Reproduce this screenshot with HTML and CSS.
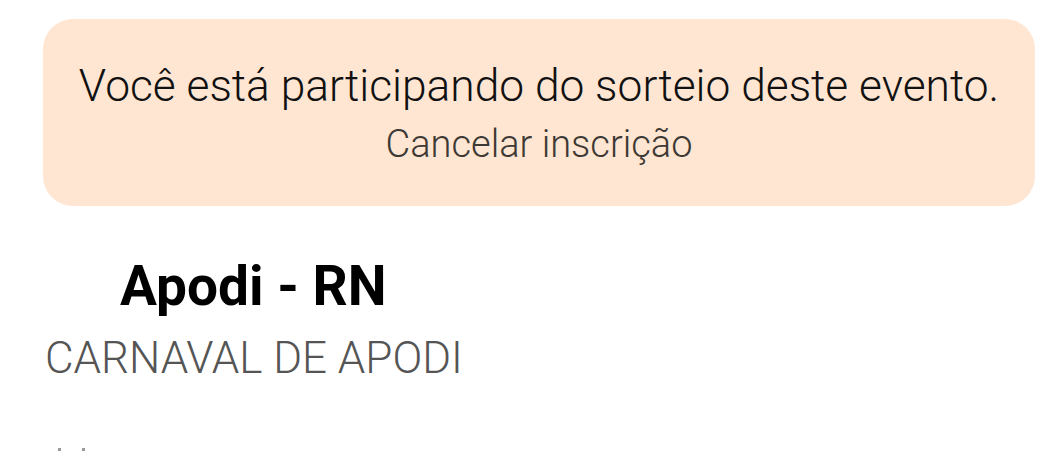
FILE: index.html
```html
<!DOCTYPE html>
<html>
<head>
    <meta name="viewport" content="width=device-width, initial-scale=1.0">
    <title>Sorteio - Apodi</title>
    <link rel="stylesheet" href="styles.css">
</head>
<body>
    <div class="notice">
        <p class="notice-text">Você está participando do sorteio deste evento.</p>
        <a class="cancel-link" href="#">Cancelar inscrição</a>
    </div>
    <div class="event">
        <h1 class="event-city">Apodi - RN</h1>
        <p class="event-name">CARNAVAL DE APODI</p>
        <div class="event-more">
            <span class="dot"></span>
            <span class="dot"></span>
        </div>
    </div>
</body>
</html>
```

FILE: styles.css
```css
body {
    margin: 0;
    background-color: #ffffff;
    font-family: Roboto, 'Noto Sans', Arial, sans-serif;
    overflow: hidden;
}
.notice {
    margin: 19px 16px 0 43px;
    height: 187px;
    box-sizing: border-box;
    padding-top: 40px;
    background-color: #ffe6d3;
    border-radius: 30px;
    text-align: center;
}
.notice-text {
    margin: 0;
    font-size: 44.3px;
    line-height: 54px;
    font-weight: 300;
    color: #111111;
}
.cancel-link {
    display: inline-block;
    margin-top: 10px;
    font-size: 38px;
    line-height: 42px;
    font-weight: 300;
    color: #3d3935;
    text-decoration: none;
}
.event {
    padding-left: 45px;
}
.event-city {
    margin: 47px 0 0 75px;
    font-size: 55px;
    line-height: 66px;
    font-weight: bold;
    color: #000000;
}
.event-name {
    margin: 0;
    font-size: 44px;
    line-height: 78px;
    font-weight: 300;
    color: #555555;
}
.event-more {
    display: flex;
    gap: 21px;
    padding: 51px 0 0 13px;
}
.dot {
    width: 3px;
    height: 3px;
    background-color: #9a9a9a;
}
```
